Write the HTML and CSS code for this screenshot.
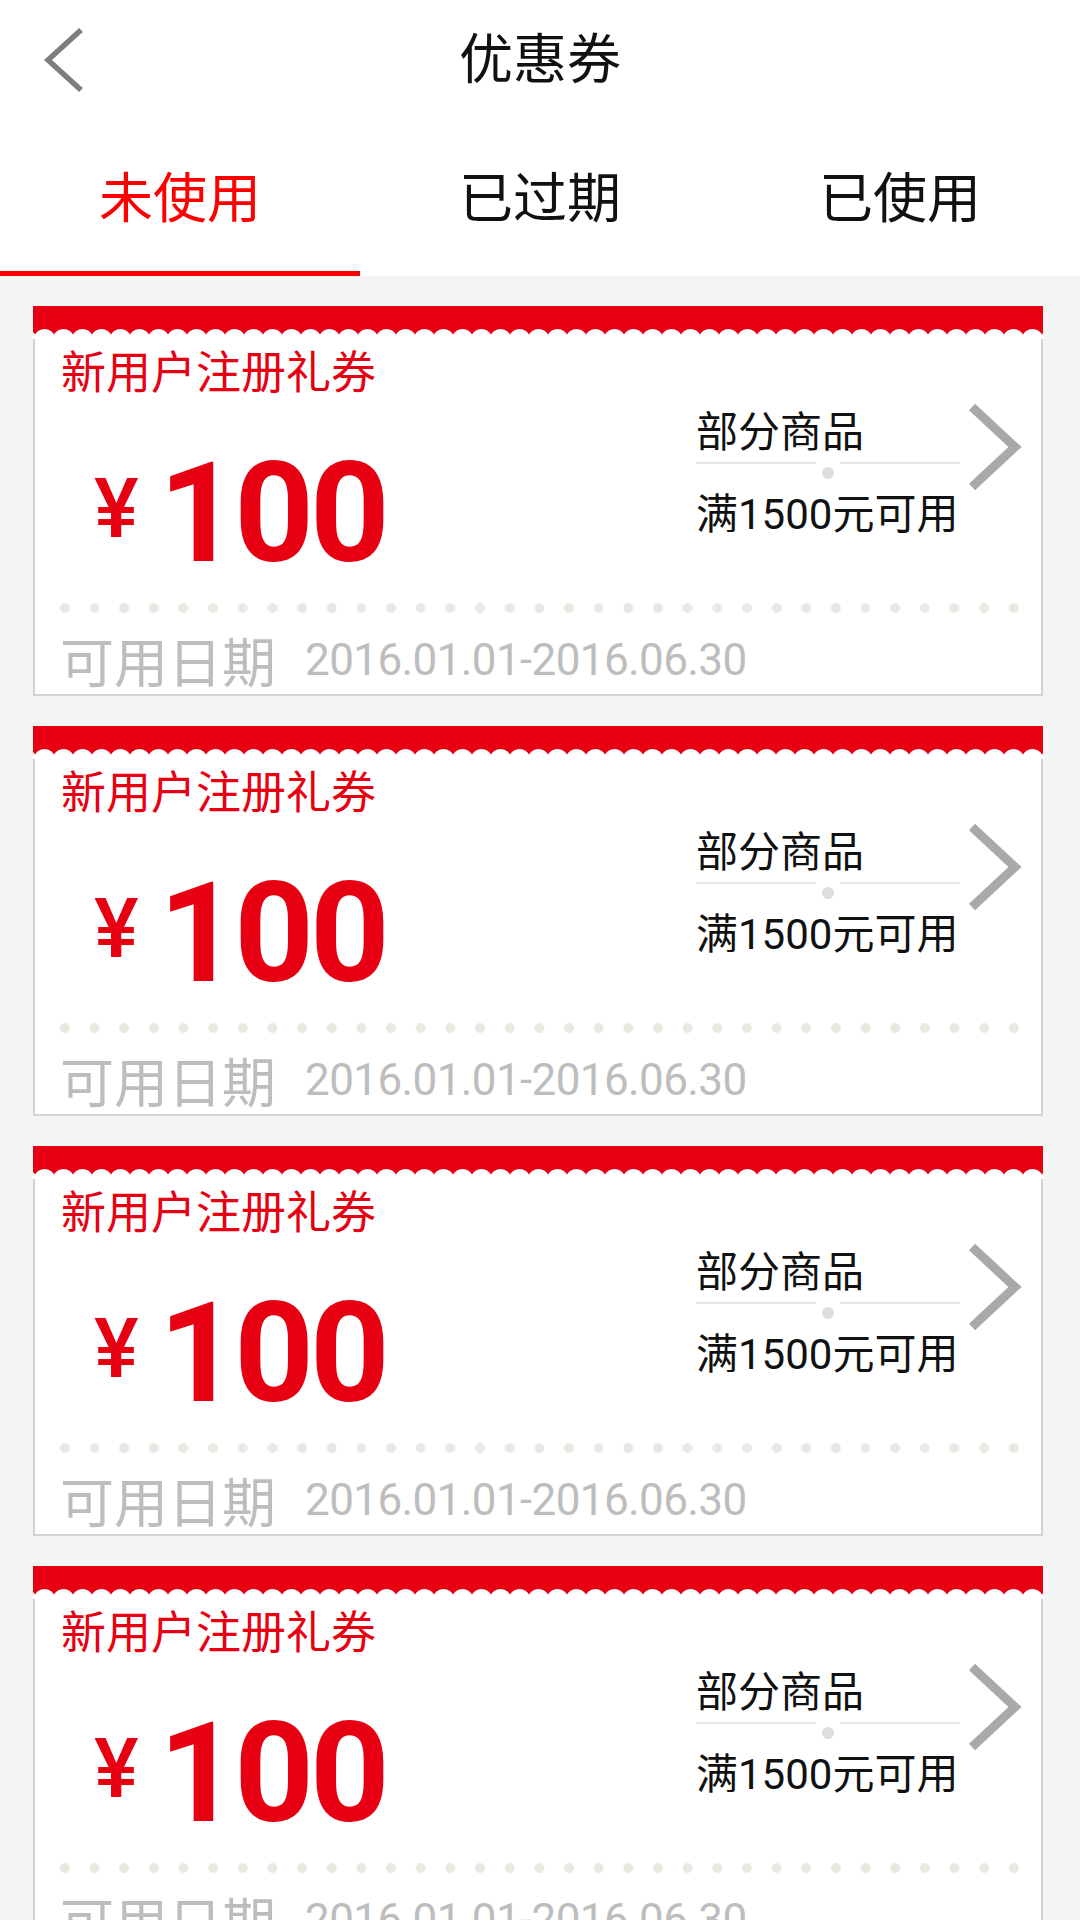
FILE: index.html
```html
<!DOCTYPE html>
<html lang="zh-CN">
<head>
<meta charset="utf-8">
<title>优惠券</title>
<link rel="stylesheet" href="styles.css">
</head>
<body>
<header class="top">
  <div class="titlebar">
    <svg class="back" width="50" height="70" viewBox="0 0 50 70"><path d="M41 5 L8 35 L41 65" fill="none" stroke="#7d7d82" stroke-width="5.5"/></svg>
    <h1 class="title">优惠券</h1>
    <span></span>
  </div>
  <nav class="tabs">
    <div class="tab active">未使用</div>
    <div class="tab">已过期</div>
    <div class="tab">已使用</div>
  </nav>
</header>
<main class="list">
  <section class="card">
    <div class="band"></div>
    <div class="body">
      <div class="name">新用户注册礼券</div>
      <div class="main">
        <div class="amount"><span class="yen">¥</span><span class="num">100</span></div>
        <div class="info">
          <div class="goods">部分商品</div>
          <div class="divider"><i class="seg"></i><i class="dot"></i><i class="seg"></i></div>
          <div class="cond">满1500元可用</div>
        </div>
        <svg class="arrow" width="60" height="100" viewBox="0 0 60 100"><path d="M8 9 L51 49 L8 89" fill="none" stroke="#a9a9a9" stroke-width="9"/></svg>
      </div>
      <div class="dots"></div>
      <div class="date"><span class="dlabel">可用日期</span><span class="dval">2016.01.01-2016.06.30</span></div>
    </div>
  </section>
  <section class="card">
    <div class="band"></div>
    <div class="body">
      <div class="name">新用户注册礼券</div>
      <div class="main">
        <div class="amount"><span class="yen">¥</span><span class="num">100</span></div>
        <div class="info">
          <div class="goods">部分商品</div>
          <div class="divider"><i class="seg"></i><i class="dot"></i><i class="seg"></i></div>
          <div class="cond">满1500元可用</div>
        </div>
        <svg class="arrow" width="60" height="100" viewBox="0 0 60 100"><path d="M8 9 L51 49 L8 89" fill="none" stroke="#a9a9a9" stroke-width="9"/></svg>
      </div>
      <div class="dots"></div>
      <div class="date"><span class="dlabel">可用日期</span><span class="dval">2016.01.01-2016.06.30</span></div>
    </div>
  </section>
  <section class="card">
    <div class="band"></div>
    <div class="body">
      <div class="name">新用户注册礼券</div>
      <div class="main">
        <div class="amount"><span class="yen">¥</span><span class="num">100</span></div>
        <div class="info">
          <div class="goods">部分商品</div>
          <div class="divider"><i class="seg"></i><i class="dot"></i><i class="seg"></i></div>
          <div class="cond">满1500元可用</div>
        </div>
        <svg class="arrow" width="60" height="100" viewBox="0 0 60 100"><path d="M8 9 L51 49 L8 89" fill="none" stroke="#a9a9a9" stroke-width="9"/></svg>
      </div>
      <div class="dots"></div>
      <div class="date"><span class="dlabel">可用日期</span><span class="dval">2016.01.01-2016.06.30</span></div>
    </div>
  </section>
  <section class="card">
    <div class="band"></div>
    <div class="body">
      <div class="name">新用户注册礼券</div>
      <div class="main">
        <div class="amount"><span class="yen">¥</span><span class="num">100</span></div>
        <div class="info">
          <div class="goods">部分商品</div>
          <div class="divider"><i class="seg"></i><i class="dot"></i><i class="seg"></i></div>
          <div class="cond">满1500元可用</div>
        </div>
        <svg class="arrow" width="60" height="100" viewBox="0 0 60 100"><path d="M8 9 L51 49 L8 89" fill="none" stroke="#a9a9a9" stroke-width="9"/></svg>
      </div>
      <div class="dots"></div>
      <div class="date"><span class="dlabel">可用日期</span><span class="dval">2016.01.01-2016.06.30</span></div>
    </div>
  </section>
</main>
</body>
</html>
```

FILE: styles.css
```css
* { box-sizing: border-box; }
html, body { margin: 0; padding: 0; }
body {
  width: 1080px;
  height: 1920px;
  overflow: hidden;
  background: #f3f4f4;
  font-family: Roboto, "Noto Sans CJK SC", sans-serif;
  color: #111;
}
.top { background: #fff; }
.titlebar {
  height: 122px;
  display: grid;
  grid-template-columns: 1fr auto 1fr;
  align-items: start;
}
.back { margin: 25px 0 0 40px; display: block; }
.title {
  margin: 0;
  font-weight: 400;
  font-size: 54px;
  line-height: 122px;
  color: #111;
}
.tabs {
  display: flex;
  height: 154px;
}
.tab {
  flex: 1;
  text-align: center;
  font-size: 54px;
  padding-top: 6px;
  line-height: 143px;
  border-bottom: 5px solid transparent;
  color: #111;
}
.tab.active { color: #ff0000; border-bottom-color: #ff0000; }

.list { padding-top: 30px; }
.card {
  width: 1010px;
  margin: 0 0 30px 33px;
  background: #fff;
}
.band {
  height: 33px;
  background:
    radial-gradient(circle 11px at 50% 34px, #fff 10.4px, rgba(255,255,255,0) 11.4px) 2px 0 / 19px 33px repeat-x,
    #e60012;
}
.body {
  border: 2px solid #d3d3d3;
  border-top: 0;
}
.name {
  height: 69px;
  line-height: 69px;
  padding-left: 26px;
  font-size: 45px;
  color: #e60012;
}
.main {
  height: 182px;
  display: flex;
  align-items: flex-start;
}
.amount {
  display: flex;
  align-items: center;
  height: 154px;
  margin-top: 28px;
  padding-left: 59px;
  color: #e60012;
}
.yen {
  font-size: 84px;
  font-weight: 500;
  line-height: 1;
  margin-top: -8px;
}
.num {
  font-size: 139px;
  font-weight: 700;
  line-height: 1;
  letter-spacing: -4px;
  margin-left: 20px;
}
.info {
  margin-left: auto;
  width: 265px;
  font-size: 42px;
  color: #111;
}
.goods { line-height: 50px; }
.divider {
  display: flex;
  align-items: flex-start;
  height: 28px;
  margin-top: 4px;
}
.seg {
  display: block;
  width: 120px;
  height: 2px;
  background: #e6e6e6;
}
.dot {
  display: block;
  width: 12px;
  height: 12px;
  margin: 5px 6px 0;
  border-radius: 50%;
  background: #dedede;
}
.cond { line-height: 50px; }
.arrow {
  display: block;
  margin: -10px 17px 0 3px;
}
.dots {
  width: 979px;
  height: 10px;
  margin: 13px 0 0 15px;
  background: radial-gradient(circle 5px at 50% 50%, #e9e9e1 4.4px, rgba(233,233,225,0) 5.4px) 0 0 / 29.66px 10px repeat-x;
}
.date {
  height: 81px;
  padding: 12px 0 0 25px;
  display: flex;
  align-items: center;
  color: #bdbdbd;
}
.dlabel { font-size: 54px; }
.dval {
  font-size: 44px;
  letter-spacing: -0.6px;
  margin-left: 29px;
}
```
